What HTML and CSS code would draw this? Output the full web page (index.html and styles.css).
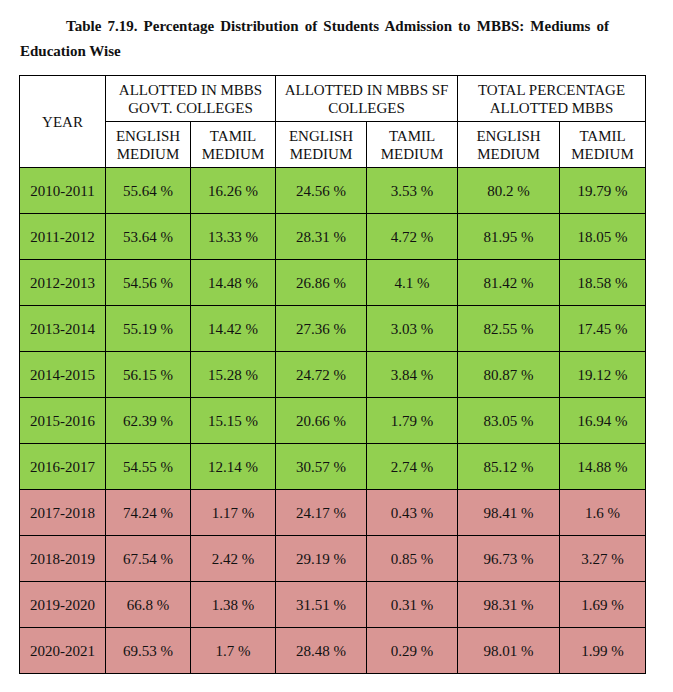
FILE: index.html
```html
<!DOCTYPE html>
<html>
<head>
<meta charset="utf-8">
<link rel="stylesheet" href="styles.css">
</head>
<body>
<p class="title">Table 7.19. Percentage Distribution of Students Admission to MBBS: Mediums of Education Wise</p>
<table class="data">
  <colgroup>
    <col class="c1"><col class="c2"><col class="c3"><col class="c4"><col class="c5"><col class="c6"><col class="c7">
  </colgroup>
  <thead>
    <tr>
      <th rowspan="2">YEAR</th>
      <th colspan="2">ALLOTTED IN MBBS<br>GOVT. COLLEGES</th>
      <th colspan="2">ALLOTTED IN MBBS SF<br>COLLEGES</th>
      <th colspan="2">TOTAL PERCENTAGE<br>ALLOTTED MBBS</th>
    </tr>
    <tr>
      <th>ENGLISH<br>MEDIUM</th><th>TAMIL<br>MEDIUM</th>
      <th>ENGLISH<br>MEDIUM</th><th>TAMIL<br>MEDIUM</th>
      <th>ENGLISH<br>MEDIUM</th><th>TAMIL<br>MEDIUM</th>
    </tr>
  </thead>
  <tbody>
    <tr class="green"><td>2010-2011</td><td>55.64 %</td><td>16.26 %</td><td>24.56 %</td><td>3.53 %</td><td>80.2 %</td><td>19.79 %</td></tr>
    <tr class="green"><td>2011-2012</td><td>53.64 %</td><td>13.33 %</td><td>28.31 %</td><td>4.72 %</td><td>81.95 %</td><td>18.05 %</td></tr>
    <tr class="green"><td>2012-2013</td><td>54.56 %</td><td>14.48 %</td><td>26.86 %</td><td>4.1 %</td><td>81.42 %</td><td>18.58 %</td></tr>
    <tr class="green"><td>2013-2014</td><td>55.19 %</td><td>14.42 %</td><td>27.36 %</td><td>3.03 %</td><td>82.55 %</td><td>17.45 %</td></tr>
    <tr class="green"><td>2014-2015</td><td>56.15 %</td><td>15.28 %</td><td>24.72 %</td><td>3.84 %</td><td>80.87 %</td><td>19.12 %</td></tr>
    <tr class="green"><td>2015-2016</td><td>62.39 %</td><td>15.15 %</td><td>20.66 %</td><td>1.79 %</td><td>83.05 %</td><td>16.94 %</td></tr>
    <tr class="green"><td>2016-2017</td><td>54.55 %</td><td>12.14 %</td><td>30.57 %</td><td>2.74 %</td><td>85.12 %</td><td>14.88 %</td></tr>
    <tr class="red"><td>2017-2018</td><td>74.24 %</td><td>1.17 %</td><td>24.17 %</td><td>0.43 %</td><td>98.41 %</td><td>1.6 %</td></tr>
    <tr class="red"><td>2018-2019</td><td>67.54 %</td><td>2.42 %</td><td>29.19 %</td><td>0.85 %</td><td>96.73 %</td><td>3.27 %</td></tr>
    <tr class="red"><td>2019-2020</td><td>66.8 %</td><td>1.38 %</td><td>31.51 %</td><td>0.31 %</td><td>98.31 %</td><td>1.69 %</td></tr>
    <tr class="red"><td>2020-2021</td><td>69.53 %</td><td>1.7 %</td><td>28.48 %</td><td>0.29 %</td><td>98.01 %</td><td>1.99 %</td></tr>
  </tbody>
</table>
</body>
</html>
```
FILE: styles.css
```css
html, body {
  margin: 0;
  padding: 0;
  background: #ffffff;
}
body {
  font-family: "Liberation Serif", "Times New Roman", serif;
  color: #111111;
}
.title {
  margin: 14px 0 11px 20px;
  width: 589px;
  font-size: 15px;
  font-weight: bold;
  line-height: 25px;
  text-align: justify;
  text-indent: 46px;
}
.data {
  margin-left: 19px;
  border-collapse: collapse;
  table-layout: fixed;
  width: 626px;
  font-size: 15px;
}
.c1 { width: 86px; }
.c2 { width: 85px; }
.c3 { width: 85px; }
.c4 { width: 91px; }
.c5 { width: 91px; }
.c6 { width: 102px; }
.c7 { width: 86px; }
.data th, .data td {
  border: 1px solid #000000;
  text-align: center;
  vertical-align: middle;
  padding: 0;
  font-weight: normal;
  line-height: 18px;
}
.data thead tr { height: 46px; }
.data tbody tr { height: 46px; }
.green td { background: #92d050; }
.red td { background: #d99694; }
```
